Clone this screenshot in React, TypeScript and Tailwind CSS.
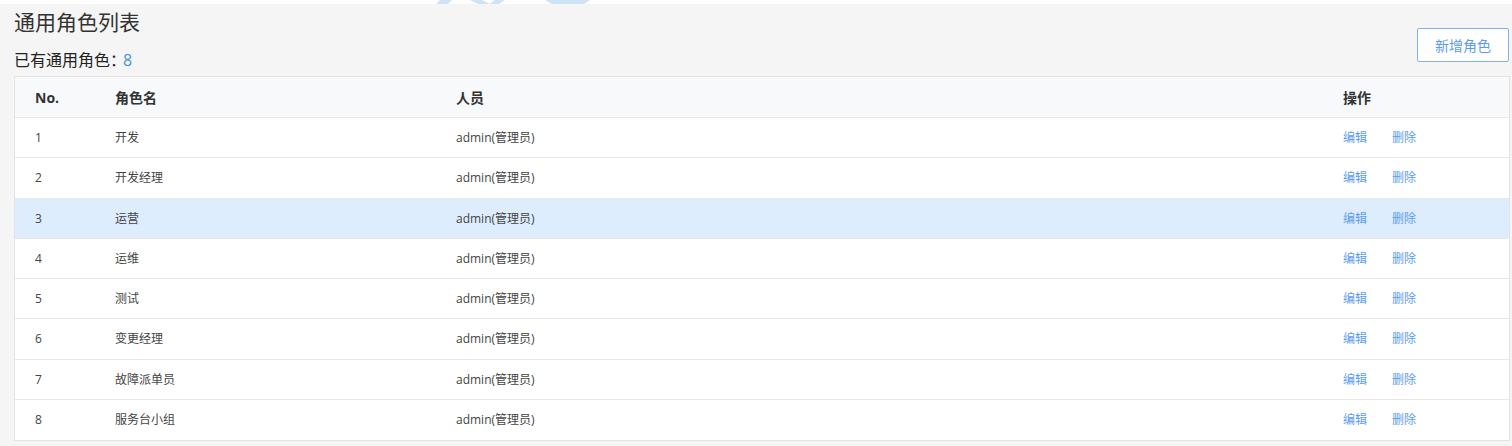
import React from "react";

const rows = [
  "开发",
  "开发经理",
  "运营",
  "运维",
  "测试",
  "变更经理",
  "故障派单员",
  "服务台小组",
];

export default function App() {
  return (
    <div
      className="w-[1512px] h-[446px] bg-[#f5f5f5] overflow-hidden"
      style={{ fontFamily: '"Open Sans", "Noto Sans CJK SC", sans-serif' }}
    >
      <div className="h-[4px] bg-white">
        <svg width="1512" height="4" className="block">
          <path d="M440 0 L452 0 L448 4 L436 4 Z" fill="#cfe3f7" />
          <path d="M470 0 L482 0 L490 4 L478 4 Z" fill="#cfe3f7" />
          <path d="M495 0 L505 0 L499 4 L489 4 Z" fill="#cfe3f7" />
          <path d="M545 0 L590 0 L584 4 L552 4 Z" fill="#cfe3f7" />
        </svg>
      </div>
      <div className="pl-[14px] pr-[2px]">
        <div className="flex items-end justify-between">
          <div>
            <div className="text-[21px] leading-[28px] text-[#333] pt-[4px]">通用角色列表</div>
            <div className="text-[16px] leading-[22px] text-[#222] mt-[13px] flex items-center">
              <span>已有通用角色：</span>
              <span className="text-[#4a90e2] -ml-[3px]">8</span>
            </div>
          </div>
          <button className="w-[92px] h-[34px] mb-[9px] mr-[1px] bg-white border border-[#7fb2f0] rounded-[2px] text-[14px] text-[#5b9cf0]">
            新增角色
          </button>
        </div>
        <div className="mt-[5px] border border-[#e3e3e3] bg-white">
          <div className="flex items-center h-[41px] bg-[#f8f9fa] border-b border-[#e8e8e8] text-[14px] font-bold text-[#333]">
            <div className="w-[100px] pl-[20px]">No.</div>
            <div className="w-[341px]">角色名</div>
            <div className="w-[887px]">人员</div>
            <div className="flex-1">操作</div>
          </div>
          {rows.map((name, i) => (
            <div
              key={i}
              className={
                "flex items-center h-[40.25px] pt-[1px] text-[12px] text-[#444] " +
                (i < rows.length - 1 ? "border-b border-[#e8e8e8] " : "") +
                (i === 2 ? "bg-[#deedfd]" : "bg-white")
              }
            >
              <div className="w-[100px] pl-[20px]">{i + 1}</div>
              <div className="w-[341px]">{name}</div>
              <div className="w-[887px]">admin(管理员)</div>
              <div className="flex-1 flex text-[#5b9cf0]">
                <span className="w-[49px]">编辑</span>
                <span>删除</span>
              </div>
            </div>
          ))}
        </div>
      </div>
    </div>
  );
}
